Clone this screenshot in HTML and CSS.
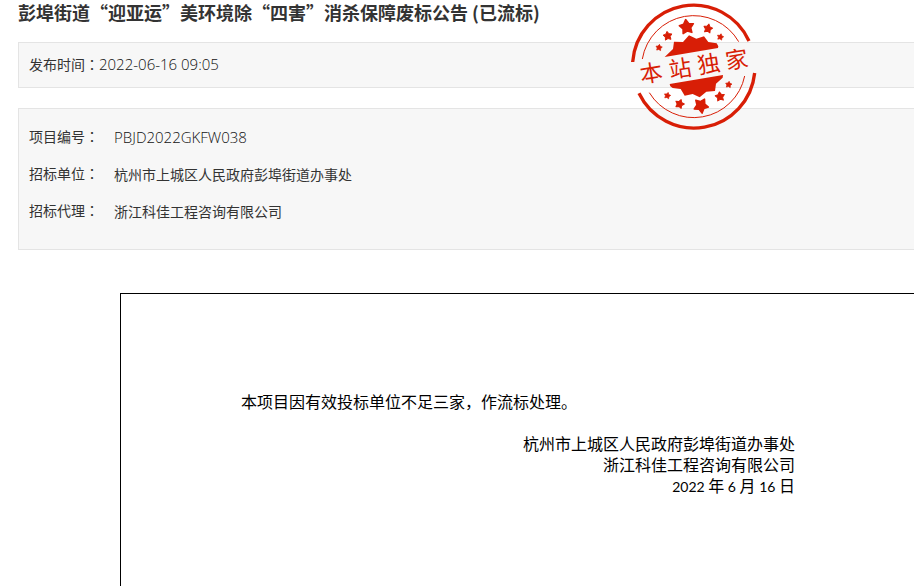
FILE: index.html
```html
<!DOCTYPE html>
<html lang="zh-CN">

<head>
    <meta charset="UTF-8">
    <meta name="viewport" content="width=device-width, initial-scale=1.0">
    <title>彭埠街道“迎亚运”美环境除“四害”消杀保障废标公告</title>
    <link rel="stylesheet" href="styles.css">
</head>

<body>
    <div class="page">
        <h1 class="title">彭埠街道“迎亚运”美环境除“四害”消杀保障废标公告 (已流标)</h1>

        <div class="publish">发布时间<span class="colon" lang="zh-TW">：</span><time class="latin">2022-06-16 09:05</time></div>

        <dl class="info">
            <div class="row">
                <dt>项目编号<span class="colon" lang="zh-TW">：</span></dt>
                <dd class="latin">PBJD2022GKFW038</dd>
            </div>
            <div class="row">
                <dt>招标单位<span class="colon" lang="zh-TW">：</span></dt>
                <dd>杭州市上城区人民政府彭埠街道办事处</dd>
            </div>
            <div class="row">
                <dt>招标代理<span class="colon" lang="zh-TW">：</span></dt>
                <dd>浙江科佳工程咨询有限公司</dd>
            </div>
        </dl>

        <!-- 公告正文 -->
        <div class="notice">
            <div class="notice-body">
                <p>本项目因有效投标单位不足三家，作流标处理。</p>
                <div class="sign">
                    <div>杭州市上城区人民政府彭埠街道办事处</div>
                    <div>浙江科佳工程咨询有限公司</div>
                    <div><span class="num">2022</span> 年 <span class="num">6</span> 月 <span class="num">16</span> 日</div>
                </div>
            </div>
        </div>

        <!-- 印章 -->
        <svg class="stamp" viewBox="0 0 450 405">
            <defs>
                <path id="star" d="M0-10L3.4-4.4 9.5-3.1 5.2 1.7 5.9 8.1 0 5.5-5.9 8.1-5.2 1.7-9.5-3.1-3.4-4.4Z" stroke="#d81e06" stroke-width="2" stroke-linejoin="round" />
            </defs>
            <g fill="none" stroke="#d81e06">
                <path stroke-width="10" d="M38 186A183 184 0 0 1 387 123M57 280A183 184 0 0 0 404 219" />
                <path stroke-width="3" d="M67 177A156 156 0 0 1 356 125M88 278A156 156 0 0 0 374 228" />
            </g>
            <g fill="#d81e06">
                <path d="M134 171L159 147 162 125 189 126 207 106 229 116 252 109 265 126 290 130 295 139 294 144Z" />
                <path d="M149 252L309 225 308 233 288 251 285 273 259 275 239 292 218 282 194 287 182 267 158 264 151 259Z" />
                <use href="#star" transform="translate(200 81) rotate(-8) scale(2.25)" />
                <use href="#star" transform="translate(143 108) rotate(-8) scale(1.4)" />
                <use href="#star" transform="translate(264 86) rotate(12) scale(1.4)" />
                <use href="#star" transform="translate(117 143) rotate(8)" />
                <use href="#star" transform="translate(301 111) rotate(14)" />
                <use href="#star" transform="translate(142 287) rotate(14)" />
                <use href="#star" transform="translate(179 312) rotate(18) scale(1.4)" />
                <use href="#star" transform="translate(243 317) rotate(28) scale(2.25)" />
                <use href="#star" transform="translate(300 290) rotate(-8) scale(1.45)" />
                <use href="#star" transform="translate(326 254) rotate(8)" />
            </g>
            <g class="stamp-text" transform="rotate(-9 221 200)">
                <text x="92" y="224">本</text>
                <text x="180" y="224">站</text>
                <text x="267" y="224">独</text>
                <text x="352" y="224">家</text>
            </g>
        </svg>
    </div>
</body>

</html>
```
FILE: styles.css
```css
* {
    box-sizing: border-box;
}

body {
    margin: 0;
    background: #fff;
    color: #333;
    font-family: "Noto Sans CJK SC", sans-serif;
    font-size: 14px;
}

.page {
    position: relative;
    display: flex;
    flex-direction: column;
    min-height: 100vh;
    padding-left: 18px;
    overflow: hidden;
}

.title {
    margin: 0 0 18px;
    font-size: 18px;
    font-weight: bold;
    line-height: 24px;
}

.publish,
.info {
    border: 1px solid #e4e4e4;
    border-right: none;
    background: #f7f7f7;
}

.publish {
    height: 46px;
    padding: 0 10px;
    margin-bottom: 20px;
    line-height: 42px;
}

.colon {
    font-family: "Noto Sans CJK TC", sans-serif;
}

.latin {
    color: #111;
    font-family: "Open Sans", sans-serif;
    font-size: 15px;
    font-weight: 300;
}

.info {
    margin: 0 0 43px;
    padding: 9px 10px 20px;
}

.row {
    display: flex;
    gap: 15px;
    height: 37px;
    line-height: 37px;
}

.row dt {
    width: 70px;
}

.row dd {
    margin: 0;
    line-height: 39px;
}

.notice {
    flex: 1;
    margin-left: 102px;
    padding: 97px 20px 20px 120px;
    border: solid #000;
    border-width: 1px 0 0 1px;
    color: #000;
    font-size: 16px;
    line-height: 21px;
}

.notice-body {
    max-width: 554px;
}

.notice p {
    margin: 0 0 21px;
}

.sign {
    text-align: right;
}

.num {
    font-family: Lato, sans-serif;
    font-size: 14px;
}

.stamp {
    position: absolute;
    top: 0;
    left: 620px;
    width: 150px;
}

.stamp-text {
    fill: #d81e06;
    font-family: "Noto Sans CJK SC", sans-serif;
    font-size: 68px;
    text-anchor: middle;
}
```
